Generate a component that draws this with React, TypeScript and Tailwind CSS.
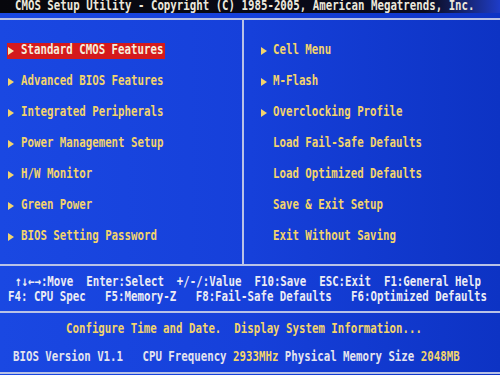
import React from "react";

const FONT = { fontFamily: '"DejaVu Sans Mono", "Liberation Mono", monospace' };

function Arrow({ color = "#f3d46c" }: { color?: string }) {
  return (
    <svg width="6" height="8" viewBox="0 0 6 8" className="block">
      <polygon points="0,0 6,4 0,8" fill={color} />
    </svg>
  );
}

function T({ children, className = "" }: { children: React.ReactNode; className?: string }) {
  return (
    <div className={`whitespace-pre leading-none font-bold text-[10.75px] scale-y-[1.28] ${className}`}>
      {children}
    </div>
  );
}

const left = [
  "Standard CMOS Features",
  "Advanced BIOS Features",
  "Integrated Peripherals",
  "Power Management Setup",
  "H/W Monitor",
  "Green Power",
  "BIOS Setting Password",
];

const right: [string, boolean][] = [
  ["Cell Menu", true],
  ["M-Flash", true],
  ["Overclocking Profile", true],
  ["Load Fail-Safe Defaults", false],
  ["Load Optimized Defaults", false],
  ["Save & Exit Setup", false],
  ["Exit Without Saving", false],
];

export default function App() {
  return (
    <div
      style={FONT}
      className="w-[500px] h-[375px] overflow-hidden flex flex-col bg-linear-to-r from-[#1a48e2] via-[#1640da] to-[#0d33c4] text-[#f3d46c]"
    >
      {/* title bar */}
      <div className="h-[13px] flex items-center pl-[15px] bg-linear-to-r from-[#07070c] via-[#0a0a1c] via-85% to-[#1e3cc8] text-[#ece8dc]">
        <T>CMOS Setup Utility - Copyright (C) 1985-2005, American Megatrends, Inc.</T>
      </div>
      <div className="h-[5px]" />
      <div className="h-[2px] bg-[#b9c2e6]" />

      {/* menu area */}
      <div className="h-[244px] flex">
        <div className="w-[244px] border-r-2 border-[#b9c2e6] pt-[15px] pl-[7px]">
          {left.map((t, i) => (
            <div key={t} className="h-[31px] flex items-center">
              <div
                className={`h-[16px] flex items-center pr-[2px] ${i === 0 ? "bg-[#d41a1c] text-[#f4eedc]" : ""}`}
              >
                <div className="ml-[1px] w-[13px]">
                  <Arrow color={i === 0 ? "#f6e6b0" : "#f3d46c"} />
                </div>
                <T>{t}</T>
              </div>
            </div>
          ))}
        </div>
        <div className="flex-1 pt-[15px] pl-[17px]">
          {right.map(([t, a]) => (
            <div key={t} className="h-[31px] flex items-center">
              <div className="w-[12px]">{a && <Arrow />}</div>
              <T>{t}</T>
            </div>
          ))}
        </div>
      </div>
      <div className="h-[2px] bg-[#b9c2e6]" />

      {/* key help */}
      <div className="h-[45px] flex flex-col pt-[9px] text-[#ececf4]">
        <div className="h-[15px] flex items-center pl-[15px]">
          <T>{"↑↓←→:Move  Enter:Select  +/-/:Value  F10:Save  ESC:Exit  F1:General Help"}</T>
        </div>
        <div className="h-[15px] flex items-center pl-[8px]">
          <T>{"F4: CPU Spec   F5:Memory-Z   F8:Fail-Safe Defaults   F6:Optimized Defaults"}</T>
        </div>
      </div>
      <div className="h-[2px] bg-[#b9c2e6]" />

      {/* description + status */}
      <div className="h-[59px] flex flex-col">
        <div className="h-[30px] flex items-center pl-[66px] pt-[3px]">
          <T>{"Configure Time and Date.  Display System Information..."}</T>
        </div>
        <div className="h-[29px] flex items-center pl-[13px] text-[#e4e4ee]">
          <T>
            {"BIOS Version V1.1   CPU Frequency "}
            <span className="text-[#f3d46c]">2933MHz</span>
            {" Physical Memory Size "}
            <span className="text-[#f3d46c]">2048MB</span>
          </T>
        </div>
      </div>
      <div className="h-[2px] bg-[#b9c2e6]" />
      <div className="flex-1" />
    </div>
  );
}
